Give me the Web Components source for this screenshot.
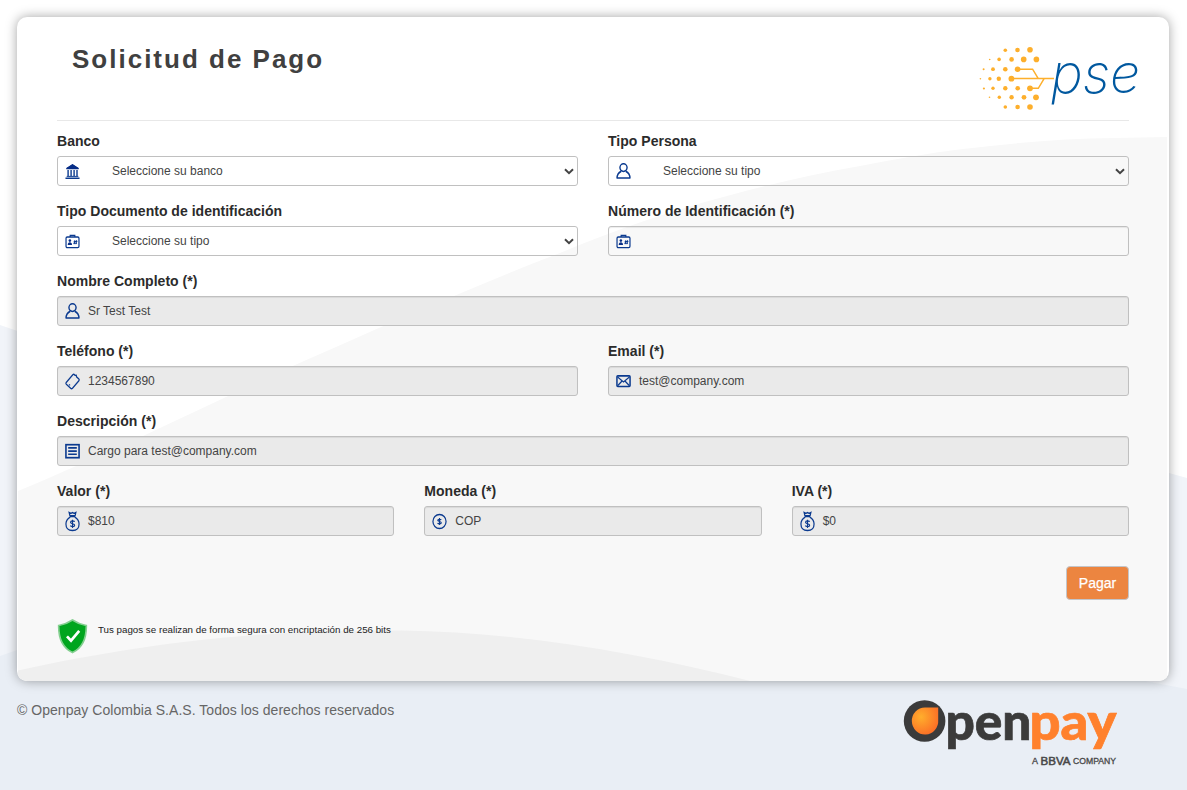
<!DOCTYPE html>
<html lang="es"><head><meta charset="utf-8"><title>Solicitud de Pago</title>
<style>
html,body{margin:0;height:100%}
body{font-family:"Liberation Sans",Arial,sans-serif;font-size:14px;line-height:20px;color:#333;background:#fff;overflow:hidden}
</style></head><body>
<payment-page></payment-page>
<script>
const define=(name,html)=>customElements.define(name,class extends HTMLElement{
  connectedCallback(){ if(this.shadowRoot) return;
    this.attachShadow({mode:'open'}).innerHTML=typeof html==='function'?html(this):html; }
});

const ICONS={
 bank:'<path d="M8 1.200 14.600 5v1.300H1.400V5z" fill="#072d86" stroke="none"/><path d="M8 1 15 5.600H1z" fill="#072d86" stroke="none"/><path d="M3.300 7v6M6.500 7v6M9.700 7v6M12.800 7v6" stroke-width="1.500"/><path d="M.5 15.200h15" stroke-width="1.500"/><path d="M1.800 13.400h12.400" stroke-width="1"/>',
 user:'<circle cx="8" cy="4.600" r="3.800"/><path d="M5.600 8.200C2.700 9.600 1.100 11.500 1.100 15.100h13.800c0-3.600-1.600-5.500-4.500-6.900" stroke-linejoin="round"/>',
 id:'<rect x="1.100" y="4" width="13.800" height="10.600" rx="1.300" stroke-width="1.300"/><path d="M5.500 4V2.300h5V4" stroke-width="1.200"/><circle cx="5.200" cy="7.600" r="1.350" fill="#072d86" stroke="none"/><path d="M2.900 12c0-1.900 1-2.700 2.300-2.700s2.300.8 2.300 2.700z" fill="#072d86" stroke="none"/><path d="M10.500 7.200l-.7 4M12.400 7.200l-.7 4M9.300 8.500h3.900M8.900 10.200h3.900" stroke-width="1"/>',
 phone:'<path d="M1.300 9.500 8.300 1.700q1-.9 1.900 0l.4.700 1.400-.1.300 1.500 2.500 2.200q.8.800 0 1.800L8 15.300q-1 .9-2 0l-4.600-4q-.9-.9-.1-1.800z" stroke-width="1.300"/><path d="m4.300 11.400 1.100 1" stroke-width="1.200"/>',
 mail:'<rect x="1" y="2.900" width="14" height="10.600" rx=".9" stroke-width="1.600"/><path d="m1.700 4 6.300 4.900L14.300 4M1.700 12.800l4.500-4.600M14.300 12.800 9.800 8.200" stroke-width="1.300"/>',
 list:'<rect x="1" y="1.700" width="14" height="13" stroke-width="1.700"/><path d="M3.400 4.900h9.200M3.400 8.100h9.200M3.400 11.300h9.200" stroke-width="1.600"/>',
 bag:'<path d="M5.200 2.600 4.400-.5l2 .9L8-.4l1.600.8 2-.9-.8 3.100zM5 3.600h6M5.500 4.100C3 5.500 1 7.800 1 11c0 4 2.600 6.500 7 6.500s7-2.500 7-6.500c0-3.200-2-5.500-4.500-6.900" stroke-width="1.300"/><path d="M10.300 8.700c-.5-.8-4.300-1.400-4.400.6 0 2 4.400.9 4.400 3 0 1.800-3.900 1.500-4.700.4M8 6.700v8.200" stroke-width="1.200"/>',
 coin:'<circle cx="8" cy="8.500" r="7" stroke-width="1.300"/><path d="M9.900 6.900c-.5-.7-3.700-1.100-3.800.4 0 1.600 3.800.8 3.800 2.500 0 1.400-3.300 1.200-4 .3M8 4.900v7.100" stroke-width="1.200"/>'
};
define('field-icon',el=>`<style>:host{display:block;width:15px;height:16px;flex:none}svg{display:block;overflow:visible}</style>
<svg width="15" height="16" viewBox="0 0 16 16" preserveAspectRatio="none" fill="none" stroke="#0b3a8f" stroke-width="1.5">${ICONS[el.getAttribute('name')]}</svg>`);

define('form-field',el=>`<style>
:host{display:block;flex:1 1 0;min-width:0}
.label{height:20px;margin-bottom:5px;font-weight:700;font-size:14px;line-height:20px;color:#2b2b2b;letter-spacing:.02px;white-space:nowrap}
.box{box-sizing:border-box;height:30px;border:1px solid #c0c0c0;border-radius:3px;display:flex;align-items:center;padding:0 0 0 7px;font-size:12px;line-height:16px;color:#444;box-shadow:inset 0 1px 1px rgba(0,0,0,.075)}
.box.filled{background:#eaeaea}
.box.select{box-shadow:none}
.value{flex:1;margin:-1px 0 0 8px;white-space:nowrap}
.select .value{margin-left:32px}
.chev{margin-right:3px;width:10px;height:7px}
</style>
<div class="label">${el.getAttribute('label')}</div>
<div class="box ${el.getAttribute('kind')||''}"><field-icon name="${el.getAttribute('icon')}"></field-icon>
<span class="value"><slot></slot></span>${el.getAttribute('kind')==='select'?'<svg class="chev" viewBox="0 0 10 7" fill="none" stroke="#444" stroke-width="2"><path d="m1 1.200 4 4 4-4"/></svg>':''}</div>`);

define('form-row',`<style>:host{display:flex;gap:30px;margin-bottom:15px}</style><slot></slot>`);

define('pse-logo',`<style>:host{display:block}svg{display:block;overflow:visible}</style>
<svg width="162" height="66" viewBox="978 45 162 66"><g fill="#fdaf2c">
${[[1005.3,50.2,1.8],[1017.5,50,2.3],[1030,49.7,2.8],[989.7,59.5,.8],[999.1,59.4,1.8],[1011.6,59.4,2.3],[1023.7,59.4,2.8],[1036.4,59.4,2.8],[983.6,69.3,1],[993,69.2,1.9],[1005.3,69.2,2.3],[1017.6,69.2,2.8],[980.4,78.7,.8],[989.9,78.7,1.7],[998.8,78.7,2.2],[1011.4,78.7,2.9],[983.9,88.5,1.1],[993,88.3,1.7],[1005.3,88.3,2.2],[1017.7,88.3,2.3],[1030,88.3,2.9],[989.5,97.3,.8],[999.3,97.3,1.7],[1011.6,97.3,2.2],[1024,97.3,2.4],[1036,97.3,2.9],[1005.3,107,1.8],[1017.6,107,2.3],[1030,107,2.8]].map(c=>`<circle cx="${c[0]}" cy="${c[1]}" r="${c[2]}"/>`).join('')}</g>
<path d="M1011 78.600h43M1017 69.200h15.600l5.700 9.400M1030 88.300h8.300l5.800-9.700" fill="none" stroke="#fdaf2c" stroke-width="1.500"/>
<text x="1051" y="93.300" font-family="Inter" font-style="italic" font-weight="200" font-size="54" textLength="89" lengthAdjust="spacingAndGlyphs" fill="#00589f">pse</text></svg>`);

define('openpay-logo',`<style>:host{display:block}svg{display:block;overflow:visible}</style>
<svg width="214" height="68" viewBox="903 699 214 68">
<defs><radialGradient id="drop" cx=".35" cy=".35" r=".7"><stop offset="0" stop-color="#ffae2c"/><stop offset="1" stop-color="#fb6f26"/></radialGradient></defs>
<circle cx="924.600" cy="721" r="20.800" fill="#3b3b3b"/>
<path d="M938.200 707.500v12.500a13.200 13.500 0 1 1-13.200-12.500z" fill="url(#drop)"/>
<g font-family="Lato" font-weight="900" font-size="50.500" stroke-width=".7"><text x="945.500" y="740.400" textLength="86" lengthAdjust="spacingAndGlyphs" fill="#3b3b3b" stroke="#3b3b3b">pen</text><text x="1029.500" y="740.400" textLength="87" lengthAdjust="spacingAndGlyphs" fill="#ff812d" stroke="#ff812d">pay</text></g>
<g font-family="Liberation Sans" fill="#484848" stroke="#484848" stroke-width=".3"><text x="1032" y="764" font-size="8.500" textLength="6" lengthAdjust="spacingAndGlyphs">A</text><text x="1040.500" y="764.500" font-size="10.500" stroke-width=".5" textLength="30" lengthAdjust="spacingAndGlyphs">BBVA</text><text x="1073" y="764" font-size="8.500" textLength="43" lengthAdjust="spacingAndGlyphs">COMPANY</text></g></svg>`);

define('secure-note',`<style>:host{display:flex;gap:10px;font-size:9.750px;line-height:14px;color:#222}svg{display:block}span{padding-top:4px}</style>
<svg width="31" height="35" viewBox="0 0 31 35"><path d="M15.500 1C11 4 6.500 5.800 1.700 6.500 1.500 19 5 28.500 15.500 33.500 26 28.500 29.500 19 29.300 6.500 24.500 5.800 20 4 15.500 1z" fill="#00a51e" stroke="#83cf8f" stroke-width="1.700"/><path d="m10 17.300 4 4.400 8.200-9.900" fill="none" stroke="#fff" stroke-width="2.700"/></svg><span><slot></slot></span>`);

define('pay-button',`<style>:host{display:block}button{display:block;box-sizing:border-box;width:63px;height:34px;padding:0;border:1px solid #c3c5ca;border-radius:4px;background:#ec8540;color:#fff;font:14px/20px "Liberation Sans",Arial,sans-serif;-webkit-text-stroke:.25px #fff}</style><button><slot></slot></button>`);

define('payment-card',`<style>
:host{display:block;box-sizing:border-box;position:relative;height:664px;border-radius:10px;overflow:hidden;background:#fff;padding:0 40px}
.waves{position:absolute;inset:0;pointer-events:none}
.content{position:relative}
header{box-sizing:border-box;height:104px;border-bottom:1px solid #e8e8e8;display:flex;justify-content:space-between;margin-bottom:10px}
h1{margin:25px 0 0 15px;font-size:26px;line-height:34px;letter-spacing:2px;color:#404040;white-space:nowrap}
pse-logo{margin:28px -11px 0 0}
.action{display:flex;justify-content:flex-end;margin-top:30px}
secure-note{margin-top:19px}
</style>
<svg class="waves" width="1152" height="664" viewBox="17 17 1152 664"><path d="M18 491C60 474 102 454 143 436C195 412 245 388 295 365C350 341 400 318 454 296C490 281 525 266 560 253C615 230 670 211 727 196C770 184 815 174 860 166C895 159 930 153 963 149C1015 143 1065 138 1115 138L1167 137V681H18z" fill="#f8f8f8"/><path d="M18 670.500C55 662 95 655 133 649C220 635 310 630 401 630.500C520 632 640 653 750 681H18z" fill="#efefef"/></svg>
<div class="content"><header><h1>Solicitud de Pago</h1><pse-logo></pse-logo></header>
<form-row><form-field label="Banco" icon="bank" kind="select">Seleccione su banco</form-field><form-field label="Tipo Persona" icon="user" kind="select">Seleccione su tipo</form-field></form-row>
<form-row><form-field label="Tipo Documento de identificación" icon="id" kind="select">Seleccione su tipo</form-field><form-field label="Número de Identificación (*)" icon="id"></form-field></form-row>
<form-row><form-field label="Nombre Completo (*)" icon="user" kind="filled">Sr Test Test</form-field></form-row>
<form-row><form-field label="Teléfono (*)" icon="phone" kind="filled">1234567890</form-field><form-field label="Email (*)" icon="mail" kind="filled">test@company.com</form-field></form-row>
<form-row><form-field label="Descripción (*)" icon="list" kind="filled">Cargo para test@company.com</form-field></form-row>
<form-row><form-field label="Valor (*)" icon="bag" kind="filled">$810</form-field><form-field label="Moneda (*)" icon="coin" kind="filled">COP</form-field><form-field label="IVA (*)" icon="bag" kind="filled">$0</form-field></form-row>
<div class="action"><pay-button>Pagar</pay-button></div>
<secure-note>Tus pagos se realizan de forma segura con encriptación de 256 bits</secure-note></div>`);

define('payment-page',`<style>
:host{display:block;position:relative;box-sizing:border-box;width:1187px;height:790px;padding:17px 18px 0 17px;overflow:hidden}
.bg{position:absolute;inset:0}
payment-card{box-shadow:0 0 12px rgba(0,0,0,.36)}
footer{position:relative;display:flex;justify-content:space-between;padding-top:18px;color:#666}
footer span{padding-top:1px;line-height:20px;letter-spacing:.04px}
openpay-logo{margin-right:52px}
</style>
<svg class="bg" width="1187" height="790"><path d="M0 325C400 470 800 360 1169 473L1187 478V790H0z" fill="#f1f4f9"/><path d="M0 656L17 650C350 550 800 610 1150 682L1187 689V790H0z" fill="#e9eef5"/></svg>
<payment-card></payment-card>
<footer><span>© Openpay Colombia S.A.S. Todos los derechos reservados</span><openpay-logo></openpay-logo></footer>`);
</script></body></html>
